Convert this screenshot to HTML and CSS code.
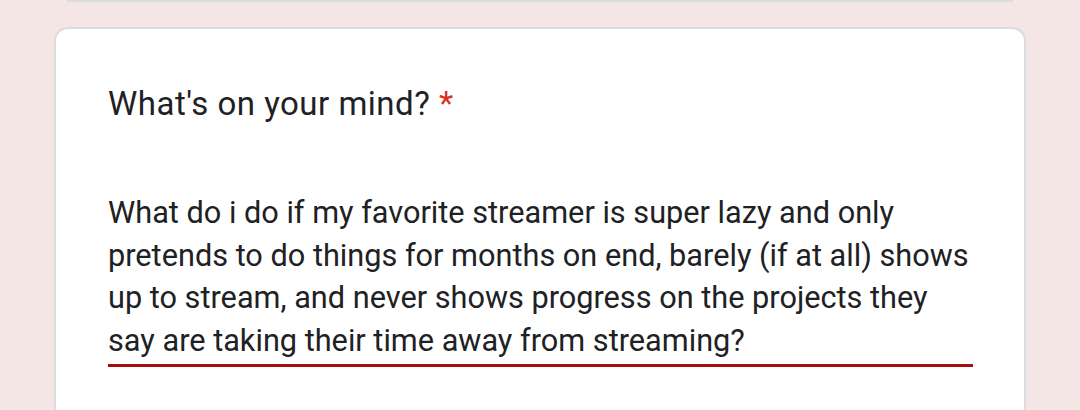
FILE: index.html
```html
<!DOCTYPE html>
<html>
<head>
<meta charset="utf-8">
<link rel="stylesheet" href="styles.css">
</head>
<body>
<div class="prev-card"></div>
<div class="card">
  <div class="question">What's on your mind? <span class="req">*</span></div>
  <div class="answer">What do i do if my favorite streamer is super lazy and only pretends to do things for months on end, barely (if at all) shows up to stream, and never shows progress on the projects they say are taking their time away from streaming?</div>
</div>
</body>
</html>
```

FILE: styles.css
```css
html, body {
  margin: 0;
  padding: 0;
}
body {
  background: #f4e6e5;
  font-family: Roboto, "Noto Sans", sans-serif;
  color: #202124;
  height: 410px;
  overflow: hidden;
}
.prev-card {
  margin: 0 67px 0 67px;
  height: 0;
  border-bottom: 2px solid #dadce0;
}
.card {
  margin: 25px 54px 0 54px;
  background: #fff;
  border: 2px solid #dadce0;
  border-bottom: none;
  border-radius: 14px 14px 0 0;
  padding: 55px 51px 43px 52px;
}
.question {
  font-size: 33px;
  line-height: 40px;
  letter-spacing: 0.5px;
}
.req {
  color: #d93025;
}
.answer {
  margin-top: 68px;
  font-size: 30.7px;
  line-height: 42.5px;
  padding-bottom: 2px;
  border-bottom: 3px solid #a50e0e;
}
```
